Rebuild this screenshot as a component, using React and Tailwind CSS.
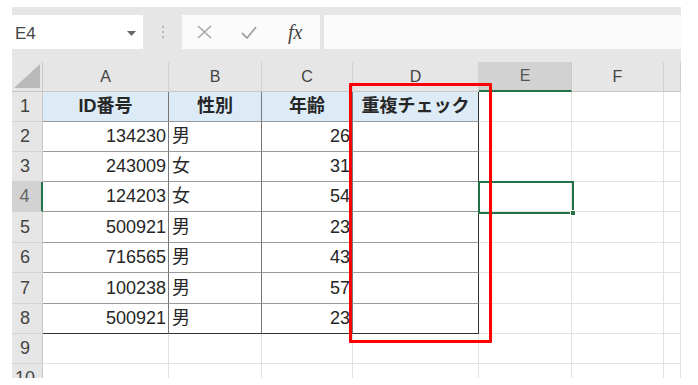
import React from 'react';

const cols = [
  { key: 'A', w: 'w-[126px]' },
  { key: 'B', w: 'w-[93px]' },
  { key: 'C', w: 'w-[91px]' },
  { key: 'D', w: 'w-[126px]' },
  { key: 'E', w: 'w-[93px]' },
  { key: 'F', w: 'w-[92px]' },
  { key: 'G', w: 'w-[17px]' },
];

const rows = [
  { n: 1, h: 'h-[30px]', cells: ['ID番号', '性別', '年齢', '重複チェック'] },
  { n: 2, h: 'h-[30px]', cells: ['134230', '男', '26', ''] },
  { n: 3, h: 'h-[30px]', cells: ['243009', '女', '31', ''] },
  { n: 4, h: 'h-[30px]', cells: ['124203', '女', '54', ''] },
  { n: 5, h: 'h-[31px]', cells: ['500921', '男', '23', ''] },
  { n: 6, h: 'h-[30px]', cells: ['716565', '男', '43', ''] },
  { n: 7, h: 'h-[31px]', cells: ['100238', '男', '57', ''] },
  { n: 8, h: 'h-[30px]', cells: ['500921', '男', '23', ''] },
  { n: 9, h: 'h-[30px]', cells: [] },
  { n: 10, h: 'h-[30px]', cells: [] },
];

function DataCell({ col, row, value }) {
  const isHead = row.n === 1;
  const bottom = row.n === 8 ? 'border-b-[#333333]' : 'border-b-[#9a9a9a]';
  const right = col === 3 ? 'border-r-[#333333]' : 'border-r-[#777777]';
  let align = 'justify-center';
  if (!isHead) {
    if (col === 0 || col === 2) align = 'justify-end pr-[2px]';
    else if (col === 1) align = 'justify-start pl-[3px]';
  }
  return (
    <div
      className={`${cols[col].w} h-full shrink-0 flex items-center border-r border-b ${right} ${bottom} ${align} ${
        isHead ? 'bg-[#ddebf7] font-bold' : 'bg-white'
      }`}
    >
      {value}
    </div>
  );
}

function EmptyCell({ col }) {
  return <div className={`${cols[col].w} h-full shrink-0 bg-white border-r border-b border-[#e1e1e1]`} />;
}

export default function App() {
  return (
    <div
      className="w-[698px] h-[385px] bg-white overflow-hidden relative text-[#262626]"
      style={{ fontFamily: '"Liberation Sans", "Noto Sans CJK JP", sans-serif' }}
    >
      <div className="ml-[12px] mt-[7px] w-[669px] h-[371px] bg-[#e6e6e6] flex flex-col overflow-hidden">
        {/* formula bar */}
        <div className="h-[55px] shrink-0 flex items-start pt-[8px]">
          <div className="w-[131px] h-[34px] bg-white flex items-center justify-between pl-[3px] pr-[7px] pt-[3px]">
            <span className="text-[17px] text-[#444444]">E4</span>
            <svg width="9" height="5" viewBox="0 0 9 5">
              <path d="M0 0 L9 0 L4.5 5 Z" fill="#666666" />
            </svg>
          </div>
          <div className="w-[39px] h-[34px] flex items-center justify-center">
            <div className="flex flex-col gap-[3px]">
              <span className="w-[2px] h-[2px] bg-[#b5b5b5]" />
              <span className="w-[2px] h-[2px] bg-[#b5b5b5]" />
              <span className="w-[2px] h-[2px] bg-[#b5b5b5]" />
            </div>
          </div>
          <div className="w-[138px] h-[34px] bg-[#fbfbfb] flex items-center pl-[15px]">
            <svg width="15" height="14" viewBox="0 0 15 14">
              <path d="M1 1 L14 13 M14 1 L1 13" stroke="#a3a3a3" strokeWidth="1.4" />
            </svg>
            <svg className="ml-[29px]" width="16" height="13" viewBox="0 0 16 13">
              <path d="M1 7 L6 12 L15 1" stroke="#a3a3a3" strokeWidth="1.8" fill="none" />
            </svg>
            <span
              className="ml-[31px] text-[20px] italic text-[#444444] leading-none"
              style={{ fontFamily: '"Liberation Serif", serif' }}
            >
              fx
            </span>
          </div>
          <div className="ml-[4px] flex-1 h-[34px] bg-[#fbfbfb]" />
        </div>

        {/* column headers */}
        <div className="h-[30px] shrink-0 flex text-[16px] text-[#444444]">
          <div className="w-[31px] h-full shrink-0 border-r border-b border-[#c8c8c8] flex items-end justify-end pr-[2px] pb-[3px]">
            <svg width="26" height="24" viewBox="0 0 26 24">
              <path d="M26 0 L26 24 L0 24 Z" fill="#b9b9b9" />
            </svg>
          </div>
          {cols.map((c, i) => (
            <div
              key={c.key}
              className={`${c.w} h-full shrink-0 flex items-center justify-center border-r ${
                i === 4
                  ? 'bg-[#d2d2d2] border-r-[#c8c8c8] border-b-2 border-b-[#217346] text-[#555555]'
                  : 'border-r-[#d0d0d0] border-b border-b-[#c8c8c8]'
              }`}
            >
              {c.key === 'G' ? '' : c.key}
            </div>
          ))}
        </div>

        {/* rows */}
        {rows.map((row) => (
          <div key={row.n} className={`${row.h} shrink-0 flex text-[18px]`}>
            <div
              className={`w-[31px] h-full shrink-0 flex items-center justify-center pr-[4px] border-b border-b-[#d4d4d4] ${
                row.n === 4
                  ? 'bg-[#d2d2d2] text-[#666666] border-r-2 border-r-[#217346]'
                  : 'text-[#444444] border-r border-r-[#c8c8c8]'
              }`}
            >
              {row.n}
            </div>
            {cols.map((c, i) =>
              i < 4 && row.n <= 8 ? (
                <DataCell key={c.key} col={i} row={row} value={row.cells[i]} />
              ) : (
                <EmptyCell key={c.key} col={i} />
              )
            )}
          </div>
        ))}
      </div>

      {/* active cell E4 */}
      <div className="absolute left-[478px] top-[181px] w-[96px] h-[33px] border-2 border-[#217346]">
        <span className="absolute right-[-4px] bottom-[-4px] w-[6px] h-[6px] bg-[#217346] border border-white" />
      </div>

      {/* red highlight box */}
      <div className="absolute left-[349px] top-[83px] w-[143px] h-[260px] border-[3px] border-[#ff0000] rounded-[1px]" />
    </div>
  );
}
